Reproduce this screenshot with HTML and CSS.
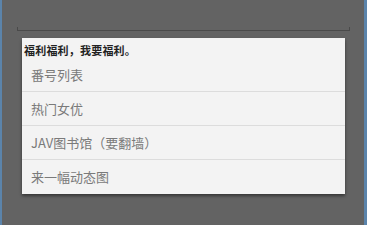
FILE: index.html
```html
<!DOCTYPE html>
<html lang="zh-CN">
<head>
    <meta charset="UTF-8">
    <meta name="viewport" content="width=device-width, initial-scale=1.0">
    <title>福利</title>
    <link rel="stylesheet" href="styles.css">
</head>
<body>
    <div class="screen">
        <div class="input-line"></div>

        <div class="dialog">
            <div class="dialog-title">福利福利，我要福利。</div>
            <ul class="menu">
                <li class="menu-item">番号列表</li>
                <li class="menu-item">热门女优</li>
                <li class="menu-item">JAV图书馆（要翻墙）</li>
                <li class="menu-item">来一幅动态图</li>
            </ul>
        </div>
    </div>
</body>
</html>
```

FILE: styles.css
```css
html, body {
    margin: 0;
    padding: 0;
}

body {
    width: 367px;
    height: 225px;
    background: #5b84ab;
    font-family: "Noto Sans CJK SC", "Noto Sans", sans-serif;
    overflow: hidden;
}

.screen {
    margin: 0 3px 0 2px;
    height: 225px;
    background: #636363;
    padding-top: 25px;
    box-sizing: border-box;
}

.input-line {
    margin: 0 14px 0 15px;
    height: 6px;
    border-bottom: 1px solid #4a4a4a;
    border-left: 1px solid #4a4a4a;
    border-right: 1px solid #4a4a4a;
    box-sizing: border-box;
    position: relative;
}

.input-line::before {
    content: "";
    position: absolute;
    left: -1px;
    right: -1px;
    height: 2px;
    background: #636363;
    top: 0;
}

.dialog {
    margin: 7px 0 0 20px;
    width: 323px;
    background: #f3f3f3;
    box-shadow: 0 2px 3px rgba(0,0,0,0.45);
}

.dialog-title {
    height: 20px;
    padding: 5px 0 0 2px;
    box-sizing: border-box;
    font-size: 11px;
    font-weight: bold;
    line-height: 14px;
    letter-spacing: 0.2px;
    color: #222;
}

.menu {
    list-style: none;
    margin: 0;
    padding: 0;
}

.menu-item {
    height: 34px;
    line-height: 33px;
    padding-left: 9px;
    font-size: 13px;
    color: #7a7a7a;
    border-bottom: 1px solid #dcdcdc;
    box-sizing: border-box;
}

.menu-item:last-child {
    border-bottom: none;
    height: 34px;
}
```
